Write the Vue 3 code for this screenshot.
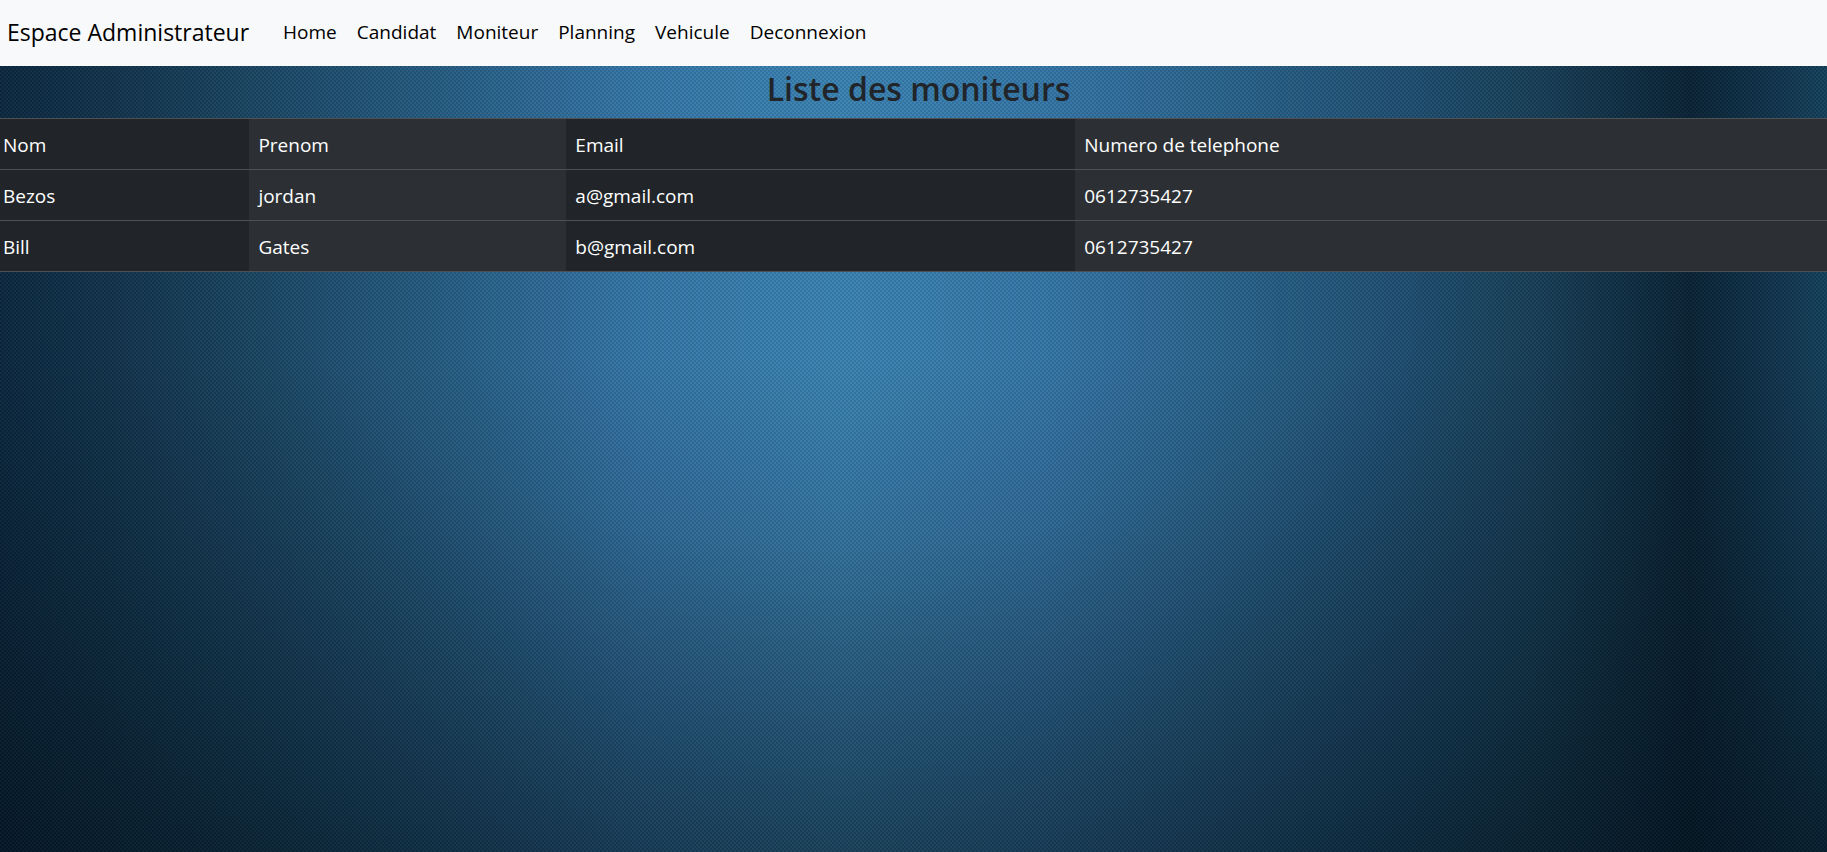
<script setup>
const links = ['Home', 'Candidat', 'Moniteur', 'Planning', 'Vehicule', 'Deconnexion']
const columns = ['Nom', 'Prenom', 'Email', 'Numero de telephone']
const rows = [
  ['Bezos', 'jordan', 'a@gmail.com', '0612735427'],
  ['Bill', 'Gates', 'b@gmail.com', '0612735427'],
]
</script>

<template>
  <div class="page">
    <nav class="navbar">
      <a class="brand" href="#">Espace Administrateur</a>
      <ul class="links">
        <li v-for="link in links" :key="link"><a href="#">{{ link }}</a></li>
      </ul>
    </nav>
    <main>
      <h1>Liste des moniteurs</h1>
      <table>
        <colgroup>
          <col class="c-nom" /><col class="c-prenom" /><col class="c-email" /><col />
        </colgroup>
        <thead>
          <tr><th v-for="c in columns" :key="c" scope="col">{{ c }}</th></tr>
        </thead>
        <tbody>
          <tr v-for="(row, i) in rows" :key="i">
            <td v-for="(cell, j) in row" :key="j">{{ cell }}</td>
          </tr>
        </tbody>
      </table>
    </main>
  </div>
</template>

<style>
body {
  margin: 0;
}
</style>

<style scoped>
.page {
  min-height: 100vh;
  font-family: "Segoe UI", "Open Sans", "Noto Sans", sans-serif;
  font-size: 19px;
  line-height: 30px;
  color: #212529;
  background:
    repeating-conic-gradient(rgba(0, 20, 40, 0.12) 0 25%, rgba(120, 190, 220, 0.05) 0 50%) 0 0 / 4px 4px,
    radial-gradient(ellipse 80% 110% at 46% 20%, transparent 0 40%, rgba(0, 10, 18, 0.2) 75%, rgba(0, 10, 18, 0.55) 110%),
    linear-gradient(transparent 42%, rgba(0, 12, 20, 0.14) 62%, rgba(0, 12, 20, 0.46)),
    linear-gradient(90deg, #0e2a42 0, #14354d 6%, #1d4865 15%, #2a6188 26%, #3777a8 35%, #3d84b3 46%, #3777a8 57%, #2a6188 68%, #215073 76%, #1a4159 84%, #0c2436 92.5%, #12344c 96%, #1a4a68 100%);
}
.navbar {
  display: flex;
  align-items: center;
  gap: 24px;
  min-height: 66px;
  box-sizing: border-box;
  padding: 0 7px 2px;
  background: #f8f9fa;
}
.navbar a {
  color: #000;
  text-decoration: none;
}
.brand {
  font-size: 23px;
}
.links {
  display: flex;
  margin: 0;
  padding: 0;
  list-style: none;
}
.links a {
  display: block;
  padding: 8px 10px;
}
h1 {
  margin: 0;
  padding: 2px 0 8px 10px;
  font-size: 32px;
  line-height: 42px;
  font-weight: 600;
  text-align: center;
}
table {
  width: 100%;
  table-layout: fixed;
  border-collapse: collapse;
  color: #fff;
}
.c-nom {
  width: 13.65%;
}
.c-prenom {
  width: 17.35%;
}
.c-email {
  width: 27.85%;
}
th,
td {
  padding: 11px 9px 9px;
  font-weight: 500;
  text-align: left;
  background: #212529;
  border-top: 1px solid #4d5154;
  border-bottom: 1px solid #4d5154;
}
th:first-child,
td:first-child {
  padding-left: 3px;
}
th:nth-child(even),
td:nth-child(even) {
  background: #2c3034;
}
</style>
